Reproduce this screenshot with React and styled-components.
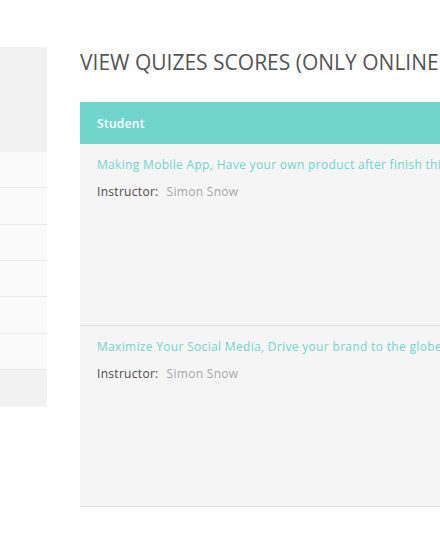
import React from "react";
import styled, { createGlobalStyle } from "styled-components";

const Global = createGlobalStyle`
  html, body { margin: 0; padding: 0; background: #fff; overflow: hidden; }
  body { font-family: "Open Sans", "Liberation Sans", sans-serif; }
`;

const Page = styled.div`
  display: flex;
  align-items: flex-start;
  gap: 33px;
  width: 900px;
`;

const Sidebar = styled.aside`
  width: 47px;
  flex: none;
  margin-top: 47px;
  display: flex;
  flex-direction: column;
`;

const SideBlock = styled.div`
  height: ${(p) => p.$h}px;
  background: ${(p) => p.$bg};
`;

const SideItem = styled.div`
  height: 35.33px;
  background: #fafafa;
  border-bottom: 1px solid #ebebeb;
`;

const Main = styled.main`
  width: 640px;
  flex: none;
`;

const Title = styled.h1`
  margin: 49px 0 0;
  font-family: "Open Sans", sans-serif;
  font-weight: 400;
  font-size: 21px;
  line-height: 26px;
  color: #555;
  letter-spacing: 0;
  white-space: nowrap;
`;

const Table = styled.div`
  margin-top: 27px;
`;

const Header = styled.div`
  height: 42px;
  background: #72d5cd;
  display: flex;
  align-items: center;
  padding-left: 17px;
  color: #fff;
  font-size: 12px;
  font-weight: 600;
  letter-spacing: 0.3px;
`;

const Row = styled.div`
  box-sizing: border-box;
  height: 181.5px;
  background: #f5f5f5;
  border-bottom: 1px solid #e3e3e3;
  padding: 13px 17px 0;
`;

const Course = styled.div`
  color: #6ed6cd;
  font-size: 12px;
  font-weight: 400;
  letter-spacing: 0.32px;
  line-height: 16px;
  white-space: nowrap;
`;

const Instructor = styled.div`
  margin-top: 11px;
  font-size: 12px;
  line-height: 16px;
  letter-spacing: 0.3px;
  white-space: nowrap;
`;

const Label = styled.span`
  color: #4a4a4a;
  font-weight: 400;
  margin-right: 8px;
`;

const Value = styled.span`
  color: #a8a8a8;
  font-weight: 400;
`;

const rows = [
  "Making Mobile App, Have your own product after finish this course",
  "Maximize Your Social Media, Drive your brand to the globe",
];

export default function App() {
  return (
    <>
      <Global />
      <Page>
        <Sidebar>
          <SideBlock $h={105} $bg="#f1f1f1" />
          {Array.from({ length: 6 }).map((_, i) => (
            <SideItem key={i} />
          ))}
          <SideBlock $h={37} $bg="#f2f2f2" />
        </Sidebar>
        <Main>
          <Title>VIEW QUIZES SCORES (ONLY ONLINE QUIZES)</Title>
          <Table>
            <Header>Student</Header>
            {rows.map((r) => (
              <Row key={r}>
                <Course>{r}</Course>
                <Instructor>
                  <Label>Instructor:</Label>
                  <Value>Simon Snow</Value>
                </Instructor>
              </Row>
            ))}
          </Table>
        </Main>
      </Page>
    </>
  );
}
